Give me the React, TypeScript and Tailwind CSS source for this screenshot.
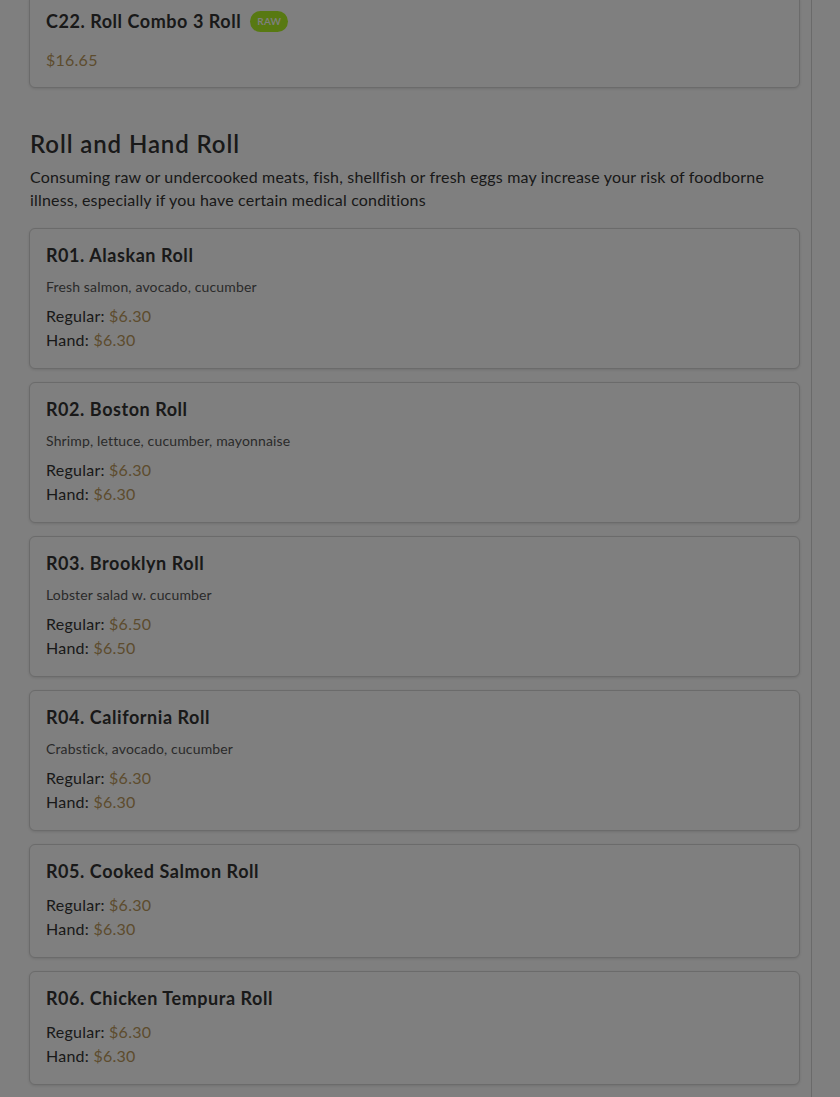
import React from "react";

type Item = {
  code: string;
  name: string;
  desc?: string;
  regular: string;
  hand: string;
};

const ROLLS: Item[] = [
  { code: "R01", name: "Alaskan Roll", desc: "Fresh salmon, avocado, cucumber", regular: "$6.30", hand: "$6.30" },
  { code: "R02", name: "Boston Roll", desc: "Shrimp, lettuce, cucumber, mayonnaise", regular: "$6.30", hand: "$6.30" },
  { code: "R03", name: "Brooklyn Roll", desc: "Lobster salad w. cucumber", regular: "$6.50", hand: "$6.50" },
  { code: "R04", name: "California Roll", desc: "Crabstick, avocado, cucumber", regular: "$6.30", hand: "$6.30" },
  { code: "R05", name: "Cooked Salmon Roll", regular: "$6.30", hand: "$6.30" },
  { code: "R06", name: "Chicken Tempura Roll", regular: "$6.30", hand: "$6.30" },
];

function RollCard({ item }: { item: Item }) {
  return (
    <div className="bg-white border border-[#d6d6d6] rounded-md shadow-[0_1px_3px_rgba(0,0,0,0.12)] px-4 pt-[15px] pb-4">
      <h3 className="text-[18px] leading-[22px] font-bold tracking-[0.55px] text-[#333]">
        {item.code}. {item.name}
      </h3>
      {item.desc && (
        <p className="mt-[11px] text-[14px] leading-[20px] tracking-[0.15px] text-[#555]">{item.desc}</p>
      )}
      <div className={`tracking-[0.25px] ${item.desc ? "mt-[7px]" : "mt-[11px]"}`}>
        <p className="text-[16px] leading-[24px] text-[#333]">
          Regular: <span className="text-[#bb995c]">{item.regular}</span>
        </p>
        <p className="text-[16px] leading-[24px] text-[#333]">
          Hand: <span className="text-[#bb995c]">{item.hand}</span>
        </p>
      </div>
    </div>
  );
}

export default function App() {
  return (
    <div className="relative min-h-screen bg-white font-['Lato','Noto_Sans',sans-serif] overflow-hidden">
      <div className="flex">
        <div className="w-[812px] border-r border-[#d4d4d4] pl-[29px] pr-[11px] pb-10">
          {/* previous section, scrolled */}
          <div className="-mt-[6px] bg-white border border-[#d6d6d6] rounded-md shadow-[0_1px_3px_rgba(0,0,0,0.12)] px-4 pt-[15px] pb-[15px]">
            <div className="flex items-center gap-[9px]">
              <h3 className="text-[18px] leading-[22px] font-bold tracking-[0.55px] text-[#333]">C22. Roll Combo 3 Roll</h3>
              <span className="rounded-full bg-[#b0f224] px-[7px] h-[21px] flex items-center text-[10px] font-semibold text-white tracking-wide">
                RAW
              </span>
            </div>
            <p className="mt-4 text-[16px] leading-[24px] tracking-[0.25px] text-[#bb995c]">$16.65</p>
          </div>

          <section className="mt-[40px]">
            <h2 className="pl-px text-[24px] leading-[32px] font-semibold tracking-[0.9px] text-[#333]">Roll and Hand Roll</h2>
            <p className="mt-[5px] pl-px text-[16px] leading-[23px] tracking-[0.18px] text-[#333] max-w-[760px]">
              Consuming raw or undercooked meats, fish, shellfish or fresh eggs may increase your risk of foodborne
              illness, especially if you have certain medical conditions
            </p>
            <div className="mt-[17px] flex flex-col gap-[13px]">
              {ROLLS.map((r) => (
                <RollCard key={r.code} item={r} />
              ))}
            </div>
          </section>
        </div>
        <div className="flex-1" />
      </div>
      <div className="fixed inset-0 bg-black/50" />
    </div>
  );
}
